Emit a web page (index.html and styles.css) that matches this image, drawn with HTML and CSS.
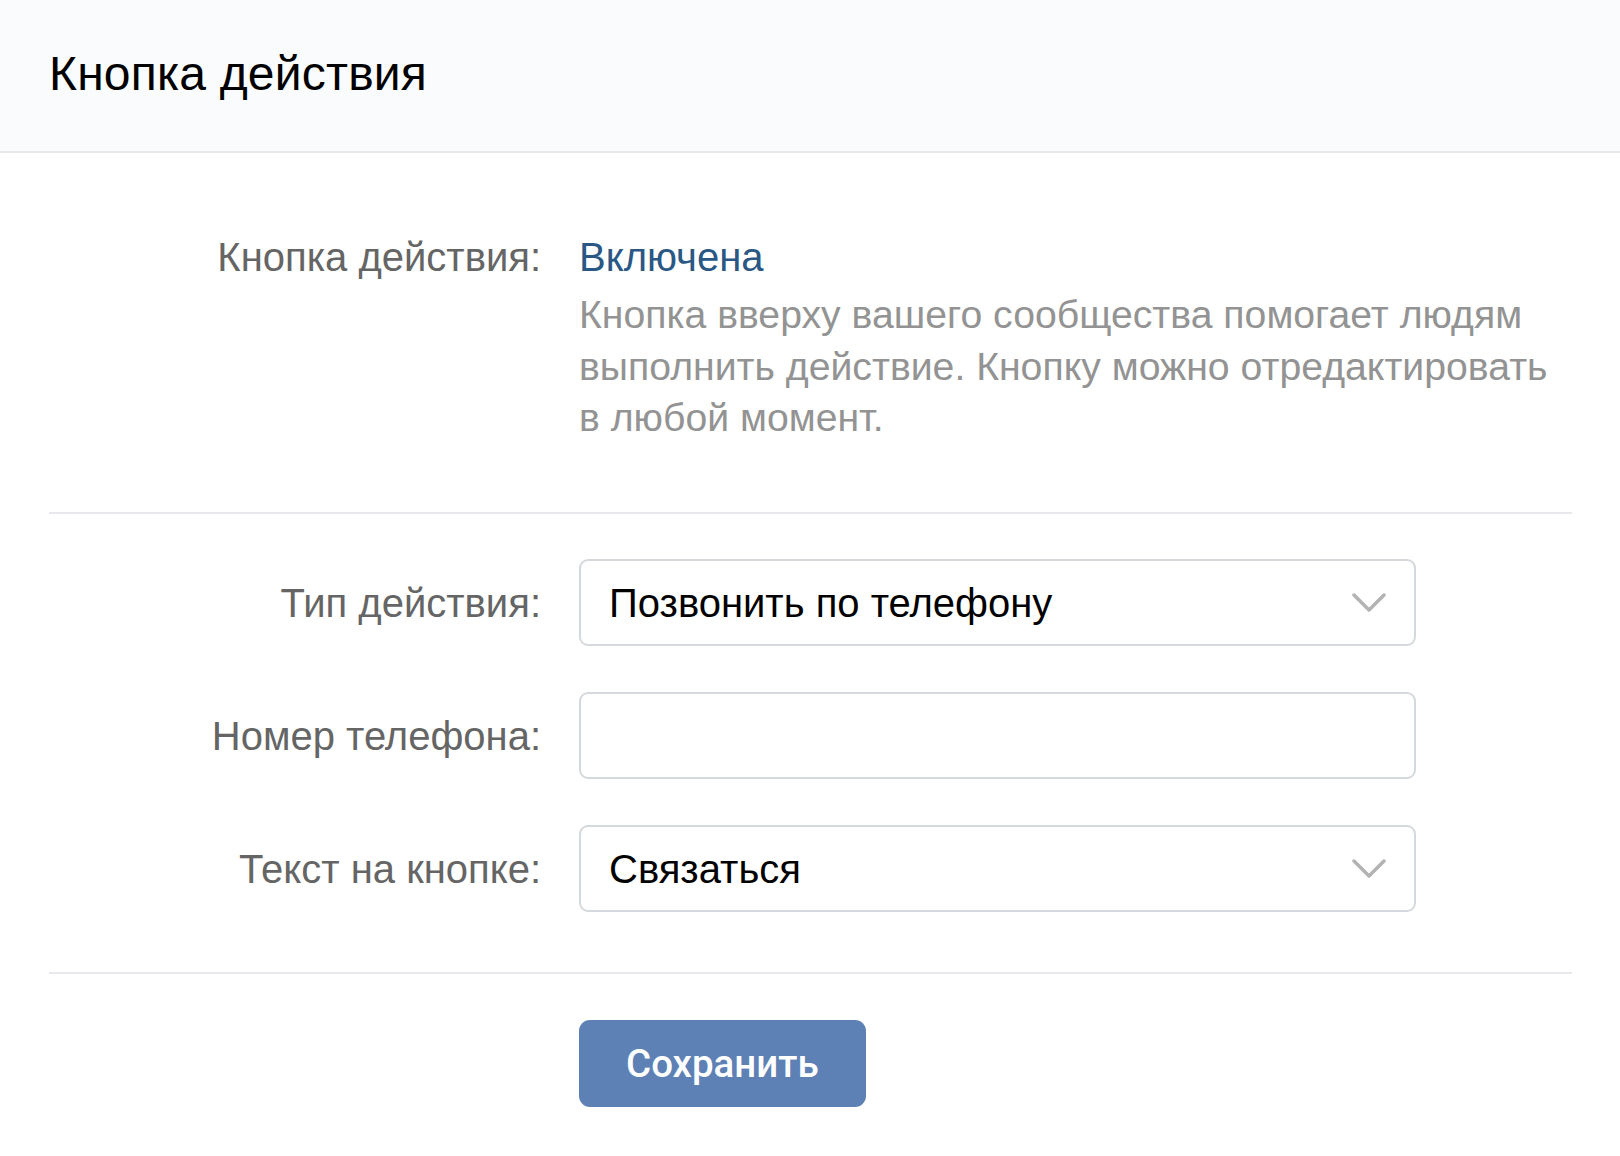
FILE: index.html
```html
<!DOCTYPE html>
<html lang="ru">
<head>
<meta charset="utf-8">
<title>Кнопка действия</title>
<link rel="stylesheet" href="styles.css">
</head>
<body>
<div class="page">
  <header class="header">
    <h1 class="title">Кнопка действия</h1>
  </header>
  <main class="content">
    <section class="section status">
      <div class="row">
        <div class="label label-top">Кнопка действия:</div>
        <div class="value">
          <div class="state">Включена</div>
          <div class="desc">Кнопка вверху вашего сообщества помогает людям<br>выполнить действие. Кнопку можно отредактировать<br>в любой момент.</div>
        </div>
      </div>
    </section>
    <section class="section form">
      <div class="row">
        <div class="label">Тип действия:</div>
        <div class="value">
          <div class="field select">
            <span class="field-text">Позвонить по телефону</span>
            <svg class="chevron" viewBox="0 0 34 21" width="34" height="21"><polyline points="2,2 17,17 32,2" fill="none" stroke="#b3b3b3" stroke-width="3.5" stroke-linecap="round" stroke-linejoin="round"/></svg>
          </div>
        </div>
      </div>
      <div class="row">
        <div class="label">Номер телефона:</div>
        <div class="value">
          <div class="field input"></div>
        </div>
      </div>
      <div class="row">
        <div class="label">Текст на кнопке:</div>
        <div class="value">
          <div class="field select">
            <span class="field-text">Связаться</span>
            <svg class="chevron" viewBox="0 0 34 21" width="34" height="21"><polyline points="2,2 17,17 32,2" fill="none" stroke="#b3b3b3" stroke-width="3.5" stroke-linecap="round" stroke-linejoin="round"/></svg>
          </div>
        </div>
      </div>
    </section>
    <section class="actions">
      <div class="row">
        <div class="label"></div>
        <div class="value">
          <button class="btn" type="button">Сохранить</button>
        </div>
      </div>
    </section>
  </main>
</div>
</body>
</html>
```

FILE: styles.css
```css
* {
  box-sizing: border-box;
}

html, body {
  margin: 0;
  padding: 0;
  background: #ffffff;
}

body {
  font-family: "Liberation Sans", Arial, sans-serif;
  font-size: 40px;
  color: #000000;
}

.header {
  height: 153px;
  background: #fafbfc;
  border-bottom: 2px solid #e7e8ec;
  display: flex;
  align-items: center;
  padding: 0 49px 4px;
}

.title {
  margin: 0;
  font-size: 48px;
  font-weight: 400;
  color: #000000;
  line-height: 1.15;
  letter-spacing: 0.2px;
}

.content {
  padding: 0 48px 0 49px;
}

.section {
  border-bottom: 2px solid #e7e8ec;
}

.status {
  padding: 78px 0 68px;
}

.row {
  display: grid;
  grid-template-columns: 492px 1fr;
  column-gap: 38px;
  align-items: center;
}

.status .row {
  align-items: start;
}

.label {
  text-align: right;
  color: #656565;
  line-height: 52px;
  white-space: nowrap;
}

.state {
  color: #2a5885;
  line-height: 52px;
}

.desc {
  margin-top: 6px;
  font-size: 39.2px;
  color: #939393;
  line-height: 51.7px;
  white-space: nowrap;
}

.form {
  display: flex;
  flex-direction: column;
  gap: 46px;
  padding: 45px 0 60px;
}

.field {
  width: 837px;
  height: 87px;
  border: 2px solid #d5d8dc;
  border-radius: 9px;
  background: #ffffff;
  display: flex;
  align-items: center;
  justify-content: space-between;
  padding: 0 28px 0 28px;
}

.field-text {
  color: #000000;
  line-height: 52px;
}

.chevron {
  display: block;
  flex: none;
  margin-top: 2px;
}

.actions {
  padding: 46px 0 48px;
}

.btn {
  height: 87px;
  padding: 0 47px 0 47px;
  border: none;
  border-radius: 11px;
  background: #5e81b5;
  color: #ffffff;
  font-family: "Roboto", "Liberation Sans", sans-serif;
  font-weight: 500;
  font-size: 38.5px;
  cursor: pointer;
}
```
